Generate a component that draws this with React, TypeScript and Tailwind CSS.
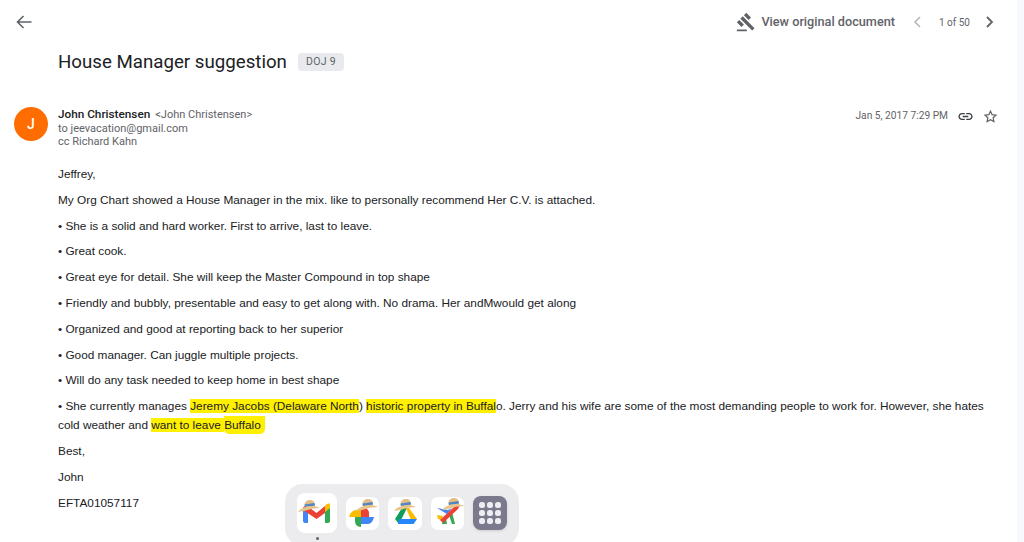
const bullets = [
  "• She is a solid and hard worker. First to arrive, last to leave.",
  "• Great cook.",
  "• Great eye for detail. She will keep the Master Compound in top shape",
  "• Friendly and bubbly, presentable and easy to get along with. No drama. Her andMwould get along",
  "• Organized and good at reporting back to her superior",
  "• Good manager. Can juggle multiple projects.",
  "• Will do any task needed to keep home in best shape",
];

function Hat({ x = 0, y = 0 }: { x?: number; y?: number }) {
  return (
    <g transform={`translate(${x} ${y})`}>
      <path d="M6.500 5C6.500 2 9 0 12 0s4.500 1.500 4.500 4L17 7H7Z" fill="#e3bd85" />
      <path d="M6.600 4.500 16.600 3 17 5.500 6.800 7Z" fill="#4f86c6" />
      <path d="M0 12C2.500 8.500 7 6.500 12 6.200S19.500 6.500 22 8C18 8.200 15 8.500 11.500 9.500S4 11.500 0 12Z" fill="#e8c48c" />
    </g>
  );
}

function Gmail() {
  return (
    <svg viewBox="0 0 40 40" className="w-[40px] h-[40px]">
      <rect width="40" height="40" rx="8" fill="#ffffff" />
      <path d="M6 15 11 13V30H8C7 30 6 29 6 28Z" fill="#4285f4" />
      <path d="M28 13 33 11V28C33 29 32 30 31 30H28Z" fill="#34a853" />
      <path d="M6 15C7 13 9 12.500 11 13.500L19.500 20 28 13V20L19.500 26 6 17Z" fill="#ea4335" />
      <path d="M28 13C29.500 10.500 32 10 33 11V15L28 19Z" fill="#fbbc04" />
      <Hat x={1} y={7} />
    </svg>
  );
}

function Photos() {
  return (
    <svg viewBox="0 0 33 33" className="w-[33px] h-[33px]">
      <rect width="33" height="33" rx="7" fill="#ffffff" />
      <path d="M3 20C4 16 7 13 10 13H15V20Z" fill="#fbbc04" />
      <path d="M15 20V10C20 10 23 13 23 16V20Z" fill="#ea4335" />
      <path d="M15 20H28C27 24 25 27 22 27H15Z" fill="#4285f4" />
      <path d="M15 20V30C11 30 9 27 9 24V20Z" fill="#34a853" />
      <Hat x={10} y={2} />
    </svg>
  );
}

function Drive() {
  return (
    <svg viewBox="0 0 34 33" className="w-[34px] h-[33px]">
      <rect width="34" height="33" rx="7" fill="#ffffff" />
      <path d="M14 11H19L11 27 7 22Z" fill="#0f9d58" />
      <path d="M11 22H29L25.500 27H10Z" fill="#2684fc" />
      <path d="M18 11H21L29 22H22.500Z" fill="#fbbc04" />
      <Hat x={6} y={2} />
    </svg>
  );
}

function Flights() {
  return (
    <svg viewBox="0 0 33 33" className="w-[33px] h-[33px]">
      <rect width="33" height="33" rx="7" fill="#ffffff" />
      <path d="M6 11 17 13 21 11 16 17Z" fill="#4285f4" />
      <path d="M6 18 12 19 10 23 7 22Z" fill="#fbbc04" />
      <path d="M18 18 21 15 24 27H21Z" fill="#34a853" />
      <path d="M12 23 15 21 16 27H11Z" fill="#34a853" />
      <path d="M9 23 24 9 29 8 27 12 12 26Z" fill="#ea4335" />
      <Hat x={11} y={1} />
    </svg>
  );
}

function AppGrid() {
  return (
    <div className="w-[34px] h-[34px] rounded-[8px] bg-[#7b7a8c] grid grid-cols-3 gap-[2.500px] p-[6px] shadow-sm">
      {Array.from({ length: 9 }).map((_, i) => (
        <span key={i} className="rounded-[2.500px] bg-[#eeeef2]" />
      ))}
    </div>
  );
}

function Mark({ children }: { children: React.ReactNode }) {
  return <span className="bg-[#fff000]">{children}</span>;
}

export default function App() {
  return (
    <div className="relative w-[1024px] h-[542px] overflow-hidden bg-white font-['Roboto',sans-serif]">
      {/* Top bar */}
      <div className="flex items-center h-[44px] pl-[16px] pr-[30px]">
        <svg viewBox="0 0 16 14" className="w-[16px] h-[14px] text-[#5f6368]" fill="none" stroke="currentColor" strokeWidth="1.6">
          <path d="M15.500 7H1.500M7.500 1 1.500 7l6 6" />
        </svg>
        <div className="ml-auto flex items-center text-[#5f6368]">
          <svg viewBox="0 0 24 24" className="w-[20px] h-[20px] mr-[5px]" fill="currentColor">
            <path d="M1 21h12v2H1v-2zM5.245 8.070l2.830-2.827 14.140 14.142-2.828 2.828L5.245 8.070zM12.317 1l5.657 5.656-2.830 2.830-5.654-5.660L12.317 1zM3.825 9.485l5.657 5.657-2.828 2.828-5.657-5.657 2.828-2.828z" />
          </svg>
          <span className="text-[12.700px] font-medium">View original document</span>
          <svg viewBox="0 0 8 12" className="w-[8px] h-[12px] ml-[18px] text-[#b5b8bc]" fill="none" stroke="currentColor" strokeWidth="1.600">
            <path d="M7 1 2 6l5 5" />
          </svg>
          <span className="text-[10px] ml-[18px] mr-[16px]">1 of 50</span>
          <svg viewBox="0 0 8 12" className="w-[8px] h-[12px] text-[#5f6368]" fill="none" stroke="currentColor" strokeWidth="1.800">
            <path d="m1 1 5 5-5 5" />
          </svg>
        </div>
      </div>

      {/* Subject */}
      <div className="flex items-center pl-[58px] mt-[3px] h-[29px]">
        <h1 className="mt-[2px] text-[18.700px] text-[#202124] font-normal">House Manager suggestion</h1>
        <span className="ml-[11px] w-[46px] h-[18px] text-center rounded-[4px] bg-[#e8eaed] text-[#5f6368] text-[10.500px] leading-[18px] tracking-[0.3px]">DOJ 9</span>
      </div>

      {/* Sender */}
      <div className="flex pl-[14px] pr-[26px] mt-[30px]">
        <div className="w-[34px] h-[34px] mt-[1px] rounded-full bg-[#ff6d00] text-white text-[14px] font-medium flex items-center justify-center">J</div>
        <div className="ml-[10px] pt-[1px] text-[11px] leading-[13px] text-[#5f6368]">
          <div className="leading-[14px]">
            <span className="text-[11.750px] font-medium text-[#202124]">John Christensen</span>
            <span className="ml-[5px]">&lt;John Christensen&gt;</span>
          </div>
          <div>to jeevacation@gmail.com</div>
          <div>cc Richard Kahn</div>
        </div>
        <div className="ml-auto flex items-center h-[20px] text-[#5f6368]">
          <span className="text-[10.200px]">Jan 5, 2017 7:29 PM</span>
          <svg viewBox="0 0 24 24" className="w-[17px] h-[17px] ml-[9px] text-[#3c4043]" fill="currentColor">
            <path d="M3.900 12c0-1.710 1.390-3.100 3.100-3.100h4V7H7c-2.760 0-5 2.240-5 5s2.240 5 5 5h4v-1.900H7c-1.710 0-3.100-1.390-3.100-3.100zM8 13h8v-2H8v2zm9-6h-4v1.900h4c1.710 0 3.100 1.390 3.100 3.100s-1.390 3.100-3.100 3.100h-4V17h4c2.760 0 5-2.240 5-5s-2.240-5-5-5z" />
          </svg>
          <svg viewBox="0 0 24 24" className="w-[15px] h-[15px] ml-[9px] text-[#5f6368]" fill="none" stroke="currentColor" strokeWidth="2">
            <path d="m12 3.500 2.600 5.600 6.100.7-4.500 4.200 1.200 6-5.400-3-5.400 3 1.200-6-4.500-4.200 6.100-.7z" />
          </svg>
        </div>
      </div>

      {/* Body */}
      <div className="pl-[58px] pr-[34px] mt-[17px] font-['Liberation_Sans',Arial,sans-serif] text-[11.820px] leading-[19px] text-[#202124] flex flex-col gap-[6.800px]">
        <p>Jeffrey,</p>
        <p>My Org Chart showed a House Manager in the mix. like to personally recommend Her C.V. is attached.</p>
        {bullets.map((b) => (
          <p key={b}>{b}</p>
        ))}
        <p>
          • She currently manages <Mark>Jeremy Jacobs (Delaware North</Mark>) <Mark>historic property in Buffal</Mark>o. Jerry and his wife are some of the most demanding people to work for. However, she hates cold weather and <Mark>want to leave </Mark><span className="bg-[#fff000] py-[2px] pr-[4px] rounded-b-[5px]">Buffalo</span>
        </p>
        <p>Best,</p>
        <p>John</p>
        <p>EFTA01057117</p>
      </div>

      {/* Scroll track */}
      <div className="absolute right-0 top-0 bottom-0 w-[7px] bg-[#f8f9fd]" />

      {/* Dock */}
      <div className="absolute left-[285px] top-[484px] w-[234px] h-[62px] rounded-[18px] bg-[#ececef] flex items-center pl-[12px] gap-[9px] pb-[4px]">
        <Gmail />
        <Photos />
        <Drive />
        <Flights />
        <AppGrid />
        <span className="absolute left-[31px] top-[53px] w-[3px] h-[3px] rounded-full bg-[#5f6368]" />
      </div>
    </div>
  );
}
